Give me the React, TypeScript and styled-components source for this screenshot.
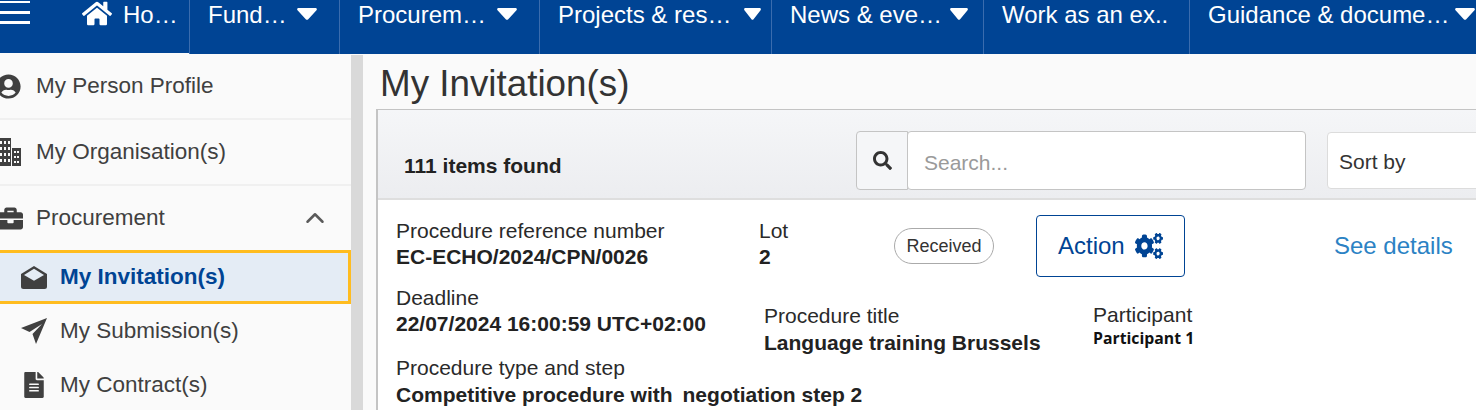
import React from "react";
import styled, {createGlobalStyle} from "styled-components";
import {
    FaBriefcase,
    FaCogs,
    FaFileAlt,
    FaHome,
    FaSearch,
    FaUserCircle,
} from "react-icons/fa";
import {FiChevronUp} from "react-icons/fi";

const GlobalStyle = createGlobalStyle`
  html, body {
    margin: 0;
    padding: 0;
    background: #fafafa;
    overflow: hidden;
  }
  body {
    font-family: "Liberation Sans", Arial, sans-serif;
    color: #222;
  }
`;

const Page = styled.div`
  width: 1476px;
  height: 410px;
  overflow: hidden;
  background: #fafafa;
`;

const TopNav = styled.nav`
  display: flex;
  height: 54px;
  color: #fff;
`;

const NavItem = styled.div<{ $width: number }>`
  flex: none;
  box-sizing: border-box;
  width: ${p => p.$width}px;
  display: flex;
  align-items: flex-start;
  padding: 0 0 0 18px;
  border-left: 1px solid #3a6cae;
  background: #004494;
  font-size: 24px;
  line-height: 30px;
  white-space: nowrap;
  overflow: hidden;
`;

const HomeItem = styled.div`
  flex: none;
  box-sizing: border-box;
  width: 189px;
  height: 53px;
  display: flex;
  align-items: flex-start;
  background: #004494;
  font-size: 24px;
  line-height: 30px;
  white-space: nowrap;
`;

const Burger = styled.div`
  width: 30px;
  height: 25px;
  margin-right: 52px;
  background: linear-gradient(transparent 0 1px, #fff 1px 3px, transparent 3px 11px, #fff 11px 14px, transparent 14px 21px, #fff 21px 24px, transparent 24px);
`;

const HomeIcon = styled(FaHome)`
  width: 30px;
  height: 27px;
  margin-right: 11px;
`;

const CaretSvg = styled.svg<{ $gap: number; $width: number }>`
  flex: none;
  width: ${p => p.$width}px;
  height: 12px;
  margin: 8px 0 0 ${p => p.$gap}px;
`;

function Caret({gap, width = 20}: { gap: number; width?: number }) {
    return (
        <CaretSvg $gap={gap} $width={width} viewBox="0 0 20 12" preserveAspectRatio="none">
            <path d="M1.5 0h17c1.2 0 1.8 1.4 1 2.3L11 11.4c-.6.6-1.5.6-2 0L.5 2.3C-.3 1.4.3 0 1.5 0z" fill="#fff"/>
        </CaretSvg>
    );
}

const Body = styled.div`
  display: flex;
  height: 356px;
`;

const Sidebar = styled.aside`
  flex: none;
  width: 351px;
  color: #404040;
  font-size: 22.5px;
`;

const SideRow = styled.div<{ $indent?: boolean; $height: number; $divider?: boolean; $active?: boolean }>`
  box-sizing: border-box;
  height: ${p => p.$height}px;
  display: flex;
  align-items: center;
  gap: ${p => (p.$indent ? 13 : 15)}px;
  padding-left: ${p => (p.$indent ? 20 : 0)}px;
  border-bottom: ${p => (p.$divider ? "2px solid #f0f0f0" : "none")};
  ${p => p.$active && `
    margin-left: -4px;
    padding-left: 21px;
    background: #e4ecf5;
    border: 3px solid #ffbc1f;
    color: #004494;
    font-weight: bold;
  `}
`;

const SideIcon = styled.span`
  flex: none;
  width: 21px;
  height: 26px;
  display: flex;
  align-items: center;
  justify-content: flex-end;
  svg {
    flex: none;
  }
`;

const SubIcon = styled.span`
  flex: none;
  width: 27px;
  display: flex;
  align-items: center;
  justify-content: center;
  color: #404040;
`;

const Briefcase = styled(FaBriefcase)`
  margin-right: -2px;
`;

const SideChevron = styled(FiChevronUp)`
  width: 30px;
  height: 30px;
  margin-left: auto;
  margin-right: 21px;
  color: #5a5a5a;
`;

const Scrollbar = styled.div`
  flex: none;
  width: 12px;
  margin-top: 1px;
  background: #d9d9d9;
`;

const Content = styled.main`
  flex: 1;
  min-width: 0;
  padding-left: 13px;
`;

const Title = styled.h1`
  margin: 0;
  height: 55px;
  padding: 7px 0 0 4px;
  box-sizing: border-box;
  font-size: 36.8px;
  line-height: 46px;
  font-weight: normal;
  color: #333;
`;

const Panel = styled.section`
  box-sizing: border-box;
  height: 301px;
  border-left: 2px solid #c4c4c4;
  border-top: 1px solid #c4c4c4;
  background: #fff;
`;

const PanelHeader = styled.div`
  box-sizing: border-box;
  height: 90px;
  display: flex;
  align-items: flex-start;
  border-bottom: 2px solid #dedede;
  background: linear-gradient(#f5f6f8, #ecedf0);
`;

const ItemsFound = styled.div`
  flex: none;
  width: 478px;
  padding: 44px 0 0 26px;
  box-sizing: border-box;
  font-size: 21px;
  line-height: 24px;
  font-weight: bold;
  color: #222;
`;

const SearchButton = styled.div`
  flex: none;
  box-sizing: border-box;
  width: 52px;
  height: 59px;
  margin-top: 21px;
  display: flex;
  align-items: center;
  justify-content: center;
  border: 1px solid #c4c4c4;
  border-radius: 4px 0 0 4px;
  background: #f5f6f8;
  color: #333;
`;

const SearchInput = styled.div`
  flex: none;
  box-sizing: border-box;
  width: 399px;
  height: 59px;
  margin: 21px 0 0 -1px;
  padding: 5px 16px 0;
  display: flex;
  align-items: center;
  border: 1px solid #c4c4c4;
  border-radius: 4px;
  background: #fff;
  color: #9a9a9a;
  font-size: 21px;
`;

const SortBox = styled.div`
  flex: none;
  box-sizing: border-box;
  width: 200px;
  height: 57px;
  margin: 22px 0 0 21px;
  padding: 3px 11px 0;
  display: flex;
  align-items: center;
  border: 1px solid #dcdcdc;
  border-radius: 4px;
  background: #fff;
  color: #333;
  font-size: 21px;
`;

const TopRow = styled.div`
  display: flex;
  align-items: flex-start;
  height: 70px;
  padding: 15px 0 0 18px;
`;

const Field = styled.div<{ $width?: number; $offset?: number }>`
  flex: none;
  width: ${p => (p.$width ? `${p.$width}px` : "auto")};
  margin-top: ${p => p.$offset ?? 0}px;
  font-size: 21px;
  line-height: 26px;
  color: #2a2a2a;
  white-space: nowrap;
`;

const Value = styled.div<{ $loose?: boolean }>`
  font-weight: bold;
  color: #222;
  margin-top: ${p => (p.$loose ? 1 : 0)}px;
`;

const SmallValue = styled.div`
  font-family: "Open Sans", "Noto Sans", sans-serif;
  font-size: 15.8px;
  line-height: 20px;
  font-weight: bold;
  color: #111;
`;

const Gap = styled.span`
  display: inline-block;
  width: 10px;
`;

const Badge = styled.div`
  flex: none;
  box-sizing: border-box;
  width: 100px;
  height: 36px;
  margin: 13px 42px 0 0;
  display: flex;
  align-items: center;
  justify-content: center;
  border: 1px solid #aaa;
  border-radius: 18px;
  font-size: 18px;
  color: #333;
`;

const ActionButton = styled.div`
  flex: none;
  box-sizing: border-box;
  width: 149px;
  height: 62px;
  display: flex;
  align-items: center;
  gap: 10px;
  padding-left: 21px;
  border: 1px solid #004494;
  border-radius: 4px;
  color: #004494;
  font-size: 24px;
`;

const ActionIcon = styled(FaCogs)`
  width: 28px;
  height: 26px;
`;

const SeeDetails = styled.a`
  flex: none;
  margin: 16px 0 0 149px;
  color: #2b82c4;
  font-size: 24px;
  line-height: 30px;
`;

const Lower = styled.div`
  display: flex;
  align-items: flex-start;
  padding-left: 18px;
`;

const LeftStack = styled.div`
  flex: none;
  width: 368px;
  display: flex;
  flex-direction: column;
  gap: 18px;
`;

function App() {
    return (
        <Page>
            <GlobalStyle/>
            <TopNav>
                <HomeItem>
                    <Burger/>
                    <HomeIcon/>
                    <span>Ho…</span>
                </HomeItem>
                <NavItem $width={150}>Fund…<Caret gap={10}/></NavItem>
                <NavItem $width={200}>Procurem…<Caret gap={11}/></NavItem>
                <NavItem $width={232}>Projects &amp; res…<Caret gap={13} width={17}/></NavItem>
                <NavItem $width={212}>News &amp; eve…<Caret gap={8} width={18}/></NavItem>
                <NavItem $width={206}>Work as an ex..</NavItem>
                <NavItem $width={287}>Guidance &amp; docume…<Caret gap={6}/></NavItem>
            </TopNav>
            <Body>
                <Sidebar>
                    <SideRow $height={66} $divider>
                        <SideIcon><FaUserCircle size={25}/></SideIcon>
                        My Person Profile
                    </SideRow>
                    <SideRow $height={66} $divider>
                        <SideIcon>
                            <svg width="23" height="28" viewBox="0 0 23 28" fill="currentColor">
                                <path d="M0 0h13v28H0zM2 3v3h2V3zm4 0v3h2V3zm4 0v3h2V3zM2 9v3h2V9zm4 0v3h2V9zm4 0v3h2V9zM2 15v3h2v-3zm4 0v3h2v-3zm4 0v3h2v-3zM2 21v3h2v-3zm4 0v3h2v-3zm4 0v3h2v-3z" fillRule="evenodd"/>
                                <path d="M14 10h9v18h-9zm2 3v2h2v-2zm3 0v2h2v-2zm-3 5v2h2v-2zm3 0v2h2v-2zm-3 5v2h2v-2zm3 0v2h2v-2z" fillRule="evenodd"/>
                            </svg>
                        </SideIcon>
                        My Organisation(s)
                    </SideRow>
                    <SideRow $height={64}>
                        <SideIcon><Briefcase size={25}/></SideIcon>
                        Procurement
                        <SideChevron/>
                    </SideRow>
                    <SideRow $height={54} $indent $active>
                        <SubIcon>
                            <svg width="26" height="23" viewBox="0 0 26 23">
                                <path d="M13 0l13 8v12.500a2.500 2.500 0 0 1-2.500 2.500h-21A2.500 2.500 0 0 1 0 20.500V8z" fill="currentColor"/>
                                <path d="M13 2.800l10 6.200-10 5.800L3 9z" fill="#e4ecf5"/>
                            </svg>
                        </SubIcon>
                        My Invitation(s)
                    </SideRow>
                    <SideRow $height={54} $indent>
                        <SubIcon>
                            <svg width="26" height="26" viewBox="0 0 26 26">
                                <path d="M26 0L0 10l8.500 4L21 6l-9.500 10L15 26z" fill="currentColor"/>
                            </svg>
                        </SubIcon>
                        My Submission(s)
                    </SideRow>
                    <SideRow $height={54} $indent>
                        <SubIcon><FaFileAlt size={26}/></SubIcon>
                        My Contract(s)
                    </SideRow>
                </Sidebar>
                <Scrollbar/>
                <Content>
                    <Title>My Invitation(s)</Title>
                    <Panel>
                        <PanelHeader>
                            <ItemsFound>111 items found</ItemsFound>
                            <SearchButton><FaSearch size={19}/></SearchButton>
                            <SearchInput>Search...</SearchInput>
                            <SortBox>Sort by</SortBox>
                        </PanelHeader>
                        <TopRow>
                            <Field $width={363} $offset={3}>
                                Procedure reference number
                                <Value>EC-ECHO/2024/CPN/0026</Value>
                            </Field>
                            <Field $width={135} $offset={3}>
                                Lot
                                <Value>2</Value>
                            </Field>
                            <Badge>Received</Badge>
                            <ActionButton>Action <ActionIcon preserveAspectRatio="none"/></ActionButton>
                            <SeeDetails>See details</SeeDetails>
                        </TopRow>
                        <Lower>
                            <LeftStack>
                                <Field>
                                    Deadline
                                    <Value>22/07/2024 16:00:59 UTC+02:00</Value>
                                </Field>
                                <Field>
                                    Procedure type and step
                                    <Value $loose>Competitive procedure with<Gap/>negotiation step 2</Value>
                                </Field>
                            </LeftStack>
                            <Field $width={329} $offset={18}>
                                Procedure title
                                <Value $loose>Language training Brussels</Value>
                            </Field>
                            <Field $offset={17}>
                                Participant
                                <SmallValue>Participant 1</SmallValue>
                            </Field>
                        </Lower>
                    </Panel>
                </Content>
            </Body>
        </Page>
    );
}

export default App;
